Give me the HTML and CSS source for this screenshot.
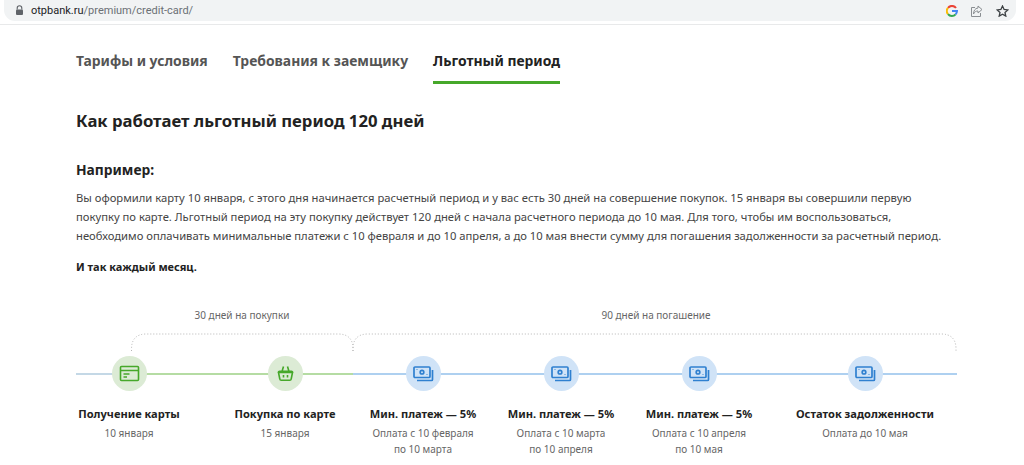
FILE: index.html
```html
<!DOCTYPE html>
<html lang="ru">
<head>
<meta charset="utf-8">
<title>Льготный период</title>
<link rel="stylesheet" href="styles.css">
</head>
<body>
<header class="bar">
  <div class="omni">
    <svg class="lock" width="9" height="11" viewBox="0 0 9 11"><path d="M2.2 4.5V3a2.3 2.3 0 0 1 4.6 0v1.5" fill="none" stroke="#5f6368" stroke-width="1.1"/><rect x="1" y="4.5" width="7" height="5.5" rx="1" fill="#5f6368"/></svg>
    <span class="url"><span class="host">otpbank.ru</span>/premium/credit-card/</span>
    <div class="actions">
      <svg width="12" height="12" viewBox="0 0 12 12" fill="none" stroke-width="2"><path d="M10 3A5 5 0 0 0 2 2.8" stroke="#ea4335"/><path d="M2 2.8a5 5 0 0 0 0 6.3" stroke="#fbbc05"/><path d="M2 9.1a5 5 0 0 0 7.6.2" stroke="#34a853"/><path d="M9.6 9.3A5 5 0 0 0 11 6H6" stroke="#4285f4"/></svg>
      <svg width="13" height="12" viewBox="0 0 13 12" fill="none" stroke="#8a8e92" stroke-width="1"><path d="M5 2.5H1.5v9h9V8"/><path d="M8 1l4 3.5L8 8V6C6 6 4.500 6.800 3.500 9 3.500 6 5 3.200 8 3z"/></svg>
      <svg width="13" height="12" viewBox="0 0 13 12" fill="none" stroke="#3c4043" stroke-width="1.300"><path d="M6.500 1l1.600 3.500 3.700.4-2.800 2.500.8 3.700-3.300-1.900-3.300 1.900.8-3.700L1.200 4.900l3.700-.4z"/></svg>
    </div>
  </div>
</header>
<main class="page">
  <nav class="tabs">
    <a class="tab">Тарифы и условия</a>
    <a class="tab">Требования к заемщику</a>
    <a class="tab tab-active">Льготный период</a>
  </nav>
  <h1 class="title">Как работает льготный период 120 дней</h1>
  <h2 class="subtitle">Например:</h2>
  <p class="text">Вы оформили карту 10 января, с этого дня начинается расчетный период и у вас есть 30 дней на совершение покупок. 15 января вы совершили первую<br>покупку по карте. Льготный период на эту покупку действует 120 дней с начала расчетного периода до 10 мая. Для того, чтобы им воспользоваться,<br>необходимо оплачивать минимальные платежи с 10 февраля и до 10 апреля, а до 10 мая внести сумму для погашения задолженности за расчетный период.</p>
  <p class="note">И так каждый месяц.</p>
  <section class="timeline">
    <div class="spans">
      <span class="span span-buy">30 дней на покупки</span>
      <span class="span span-pay">90 дней на погашение</span>
    </div>
    <svg class="brackets" width="881" height="20" viewBox="0 0 881 20" fill="none" stroke="#b5b5b5" stroke-width="1" stroke-dasharray="1 2">
      <path d="M55.500 19v-2q0-15 15-15H262q15 0 15 15v2"/>
      <path d="M277 19v-2q0-15 15-15H865q15 0 15 15v2"/>
    </svg>
    <div class="track">
      <span class="seg seg-start"></span><span class="seg seg-green"></span><span class="seg seg-blue"></span>
      <div class="steps">
        <div class="step step-1">
          <span class="dot dot-green"><svg width="21" height="17" viewBox="0 0 21 17" fill="none" stroke="#46a82a" stroke-width="1.600"><rect x="1.500" y="1.500" width="18" height="14" rx="1"/><path d="M1.500 5.500h18M4.500 9h6M4.500 12h3.500"/></svg></span>
          <b class="name">Получение карты</b><span class="sub">10 января</span>
        </div>
        <div class="step step-2">
          <span class="dot dot-green"><svg width="17" height="17" viewBox="0 0 17 17" fill="none" stroke="#46a82a" stroke-width="1.600"><path d="M1.500 7.500h14l-1.300 6.500a1.500 1.500 0 0 1-1.500 1.300H4.300A1.500 1.500 0 0 1 2.800 14z"/><path d="M1.500 7.500c0-1 .5-1.200 1-1.200h12c.5 0 1 .2 1 1.200M5 6.500l1.500-5M12 6.500l-1.500-5M6.500 10v2.500M10.500 10v2.500"/></svg></span>
          <b class="name">Покупка по карте</b><span class="sub">15 января</span>
        </div>
        <div class="step step-3">
          <span class="dot dot-blue"><svg width="21" height="16" viewBox="0 0 21 16" fill="none" stroke="#2f80d0" stroke-width="1.700"><rect x="1" y="1" width="16" height="10.500" rx="1"/><circle cx="9" cy="6.200" r="1.800"/><path d="M4 3.500v.5M14 8.500v.5"/><path d="M19.500 4v9.500a1 1 0 0 1-1 1H4"/></svg></span>
          <b class="name">Мин. платеж — 5%</b><span class="sub">Оплата с 10 февраля<br>по 10 марта</span>
        </div>
        <div class="step step-4">
          <span class="dot dot-blue"><svg width="21" height="16" viewBox="0 0 21 16" fill="none" stroke="#2f80d0" stroke-width="1.700"><rect x="1" y="1" width="16" height="10.500" rx="1"/><circle cx="9" cy="6.200" r="1.800"/><path d="M4 3.500v.5M14 8.500v.5"/><path d="M19.500 4v9.500a1 1 0 0 1-1 1H4"/></svg></span>
          <b class="name">Мин. платеж — 5%</b><span class="sub">Оплата с 10 марта<br>по 10 апреля</span>
        </div>
        <div class="step step-5">
          <span class="dot dot-blue"><svg width="21" height="16" viewBox="0 0 21 16" fill="none" stroke="#2f80d0" stroke-width="1.700"><rect x="1" y="1" width="16" height="10.500" rx="1"/><circle cx="9" cy="6.200" r="1.800"/><path d="M4 3.500v.5M14 8.500v.5"/><path d="M19.500 4v9.500a1 1 0 0 1-1 1H4"/></svg></span>
          <b class="name">Мин. платеж — 5%</b><span class="sub">Оплата с 10 апреля<br>по 10 мая</span>
        </div>
        <div class="step step-6">
          <span class="dot dot-blue"><svg width="21" height="16" viewBox="0 0 21 16" fill="none" stroke="#2f80d0" stroke-width="1.700"><rect x="1" y="1" width="16" height="10.500" rx="1"/><circle cx="9" cy="6.200" r="1.800"/><path d="M4 3.500v.5M14 8.500v.5"/><path d="M19.500 4v9.500a1 1 0 0 1-1 1H4"/></svg></span>
          <b class="name">Остаток задолженности</b><span class="sub">Оплата до 10 мая</span>
        </div>
      </div>
    </div>
  </section>
</main>
</body>
</html>
```
FILE: styles.css
```css
html, body { margin: 0; padding: 0; background: #fff; overflow: hidden; height: 465px; }
body { font-family: "Noto Sans", "Open Sans", sans-serif; color: #222; }

.bar { height: 24px; border-bottom: 1px solid #e8e9ea; box-sizing: content-box; }
.omni { height: 21px; margin: 0 8px 0 4px; padding: 0 7.500px 0 11px; background: #f1f3f4; border-radius: 0 0 11px 11px; display: flex; align-items: center; }
.lock { margin-right: 7px; flex: none; }
.url { font-family: Roboto, sans-serif; font-size: 11px; color: #6b7075; }
.host { color: #202124; }
.actions { margin-left: auto; display: flex; align-items: center; gap: 12.500px; }

.page { width: 881px; margin-left: 76px; }
.tabs { display: flex; gap: 25px; padding-top: 24px; }
.tab { font-size: 13.900px; font-weight: 700; color: #555; line-height: 24px; padding-bottom: 8px; border-bottom: 3px solid transparent; }
.tab-active { color: #222; border-bottom-color: #46a82a; }

.title { margin: 25px 0 0; font-size: 16.700px; font-weight: 700; line-height: 24px; color: #222; }
.subtitle { margin: 25px 0 0; font-size: 13.800px; font-weight: 700; line-height: 24px; color: #222; }
.text { margin: 6px 0 0; font-size: 11.220px; line-height: 19px; color: #444; white-space: nowrap; }
.note { margin: 12px 0 0; font-size: 11px; font-weight: 700; line-height: 19px; color: #222; }

.timeline { margin-top: 31px; position: relative; }
.spans { display: flex; font-size: 10px; line-height: 16px; color: #666; }
.span { text-align: center; flex: none; }
.span-buy { width: 332px; }
.span-pay { width: 300px; margin-left: 98px; }
.brackets { display: block; margin-top: 9px; }
.track { position: relative; margin-top: 4px; }
.seg { position: absolute; top: 17px; height: 2px; z-index: 0; }
.seg-start { left: 0; width: 36px; background: #c4d8e6; }
.seg-green { left: 36px; width: 241px; background: #b5dca3; }
.seg-blue { left: 277px; right: 0; background: #aed0f0; }

.steps { display: flex; position: relative; z-index: 1; }
.step { display: flex; flex-direction: column; align-items: center; text-align: center; flex: none; }
.step-1 { width: 106px; }
.step-2 { width: 106px; margin-left: 50px; }
.step-3 { width: 108px; margin-left: 31px; }
.step-4 { width: 108px; margin-left: 30px; }
.step-5 { width: 108px; margin-left: 30px; }
.step-6 { width: 140px; margin-left: 42px; }
.dot { width: 35px; height: 35px; border-radius: 50%; display: flex; align-items: center; justify-content: center; }
.dot-green { background: #dcebd5; }
.dot-blue { background: #d0e3f7; }
.name { margin-top: 14px; font-size: 11.100px; font-weight: 700; line-height: 18px; color: #222; white-space: nowrap; }
.sub { margin-top: 2px; font-size: 10px; line-height: 16px; color: #666; white-space: nowrap; }
```
